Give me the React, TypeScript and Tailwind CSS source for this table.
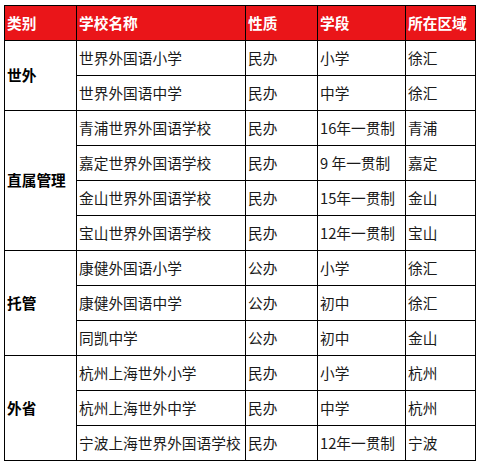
import React from "react";

type Row = { name: string; nature: string; stage: string; area: string };

const groups: { cat: string; rows: Row[] }[] = [
  {
    cat: "世外",
    rows: [
      { name: "世界外国语小学", nature: "民办", stage: "小学", area: "徐汇" },
      { name: "世界外国语中学", nature: "民办", stage: "中学", area: "徐汇" },
    ],
  },
  {
    cat: "直属管理",
    rows: [
      { name: "青浦世界外国语学校", nature: "民办", stage: "16年一贯制", area: "青浦" },
      { name: "嘉定世界外国语学校", nature: "民办", stage: "9 年一贯制", area: "嘉定" },
      { name: "金山世界外国语学校", nature: "民办", stage: "15年一贯制", area: "金山" },
      { name: "宝山世界外国语学校", nature: "民办", stage: "12年一贯制", area: "宝山" },
    ],
  },
  {
    cat: "托管",
    rows: [
      { name: "康健外国语小学", nature: "公办", stage: "小学", area: "徐汇" },
      { name: "康健外国语中学", nature: "公办", stage: "初中", area: "徐汇" },
      { name: "同凯中学", nature: "公办", stage: "初中", area: "金山" },
    ],
  },
  {
    cat: "外省",
    rows: [
      { name: "杭州上海世外小学", nature: "民办", stage: "小学", area: "杭州" },
      { name: "杭州上海世外中学", nature: "民办", stage: "中学", area: "杭州" },
      { name: "宁波上海世界外国语学校", nature: "民办", stage: "12年一贯制", area: "宁波" },
    ],
  },
];

const td = "border border-black h-[35px] p-0 pl-[2px] align-middle whitespace-nowrap overflow-hidden";
const th = "border border-black h-[35px] p-0 pl-[2px] align-middle text-left font-bold text-white";

export default function App() {
  return (
    <div
      className="w-[482px] h-[469px] bg-white pl-[4px] pt-[5px] overflow-hidden"
      style={{ fontFamily: '"Noto Sans CJK SC", "Noto Sans", sans-serif' }}
    >
      <table className="table-fixed border-collapse w-[471px] text-[14.7px] leading-none text-[#1a1a1a]">
        <colgroup>
          <col className="w-[72px]" />
          <col className="w-[169px]" />
          <col className="w-[72px]" />
          <col className="w-[88px]" />
          <col className="w-[70px]" />
        </colgroup>
        <thead>
          <tr className="bg-[#ea1519]">
            <th className={th}>类别</th>
            <th className={th}>学校名称</th>
            <th className={th}>性质</th>
            <th className={th}>学段</th>
            <th className={th}>所在区域</th>
          </tr>
        </thead>
        <tbody>
          {groups.map((g) =>
            g.rows.map((r, i) => (
              <tr key={g.cat + i}>
                {i === 0 && (
                  <td rowSpan={g.rows.length} className={td + " font-bold text-black"}>
                    {g.cat}
                  </td>
                )}
                <td className={td}>{r.name}</td>
                <td className={td}>{r.nature}</td>
                <td className={td}>{r.stage}</td>
                <td className={td}>{r.area}</td>
              </tr>
            ))
          )}
        </tbody>
      </table>
    </div>
  );
}
